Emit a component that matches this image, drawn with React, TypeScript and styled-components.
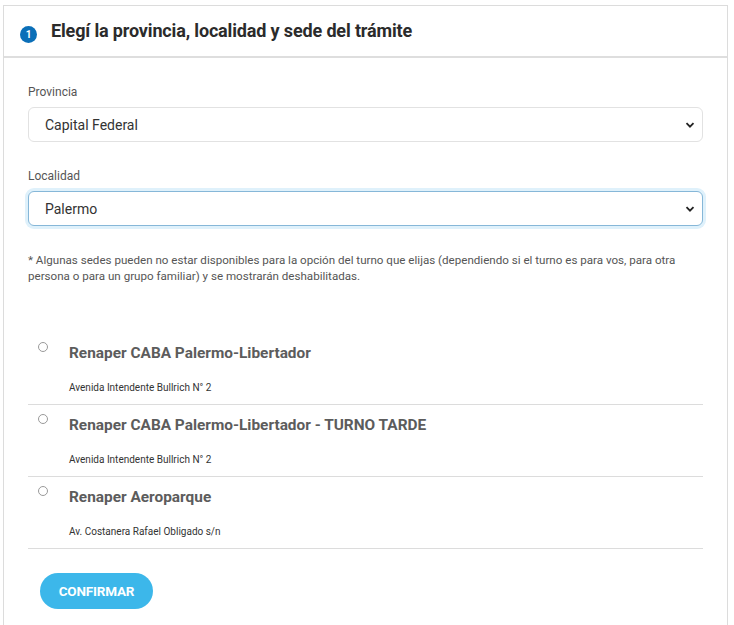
import React from "react";
import styled, { createGlobalStyle } from "styled-components";

const Global = createGlobalStyle`
  html, body { margin: 0; padding: 0; background: #fff; }
  body { font-family: Roboto, "Liberation Sans", sans-serif; color: #333; }
  * { box-sizing: border-box; }
`;

const Page = styled.div`
  padding: 5px 6px 0 3px;
`;

const Panel = styled.section`
  border: 1px solid #dcdcdc;
  border-bottom: none;
  background: #fff;
`;

const Header = styled.header`
  height: 52px;
  display: flex;
  align-items: center;
  gap: 14px;
  padding: 4px 0 0 16px;
  border-bottom: 2px solid #dedede;
`;

const Badge = styled.span`
  width: 17px;
  height: 17px;
  border-radius: 50%;
  background: #0b6fb8;
  color: #fff;
  font-size: 10px;
  font-weight: 700;
  display: inline-flex;
  align-items: center;
  justify-content: center;
  margin-top: 3px;
`;

const Title = styled.h2`
  margin: 0 0 5px 0;
  font-size: 18px;
  font-weight: 700;
  color: #2b2b2b;
  letter-spacing: -0.15px;
`;

const Body = styled.div`
  padding: 26px 24px 16px 24px;
`;

const Field = styled.div`
  display: flex;
  flex-direction: column;
  gap: 7px;
  margin-bottom: 26px;
`;

const Label = styled.label`
  font-size: 12px;
  line-height: 16px;
  color: #555;
`;

const SelectWrap = styled.div`
  position: relative;
`;

const Select = styled.select<{ $focused?: boolean }>`
  appearance: none;
  width: 100%;
  height: 35px;
  padding: 0 30px 0 16px;
  font-family: Roboto, "Liberation Sans", sans-serif;
  font-size: 14px;
  color: #333;
  background: #fff;
  border-radius: 6px;
  border: 1px solid ${(p) => (p.$focused ? "#86b7d8" : "#e2e2e2")};
  box-shadow: ${(p) => (p.$focused ? "0 0 0 3px #dff1fb" : "none")};
  outline: none;
`;

const Chevron = styled.svg`
  position: absolute;
  right: 8px;
  top: 50%;
  width: 10px;
  height: 10px;
  transform: translateY(-50%);
  pointer-events: none;
`;

const Note = styled.p`
  margin: 0 0 49px 0;
  font-size: 11.6px;
  line-height: 16px;
  color: #555;
`;

const List = styled.div`
  display: flex;
  flex-direction: column;
`;

const Item = styled.label`
  display: grid;
  grid-template-columns: 41px 1fr;
  height: 72px;
  border-bottom: 1px solid #dcdcdc;
  padding-top: 9px;
`;

const Radio = styled.input`
  appearance: none;
  margin: 0 0 0 10px;
  width: 10px;
  height: 10px;
  border-radius: 50%;
  border: 1px solid #9a9a9a;
  background: #fff;
`;

const ItemText = styled.div`
  display: flex;
  flex-direction: column;
`;

const ItemTitle = styled.span`
  font-size: 15.4px;
  font-weight: 700;
  color: #5c5c5c;
  line-height: 20px;
  margin-top: 1px;
`;

const Address = styled.span`
  margin-top: 18px;
  font-size: 10px;
  color: #333;
  line-height: 14px;
`;

const Confirm = styled.button`
  margin: 24px 0 0 12px;
  width: 113px;
  height: 36px;
  border: none;
  border-radius: 18px;
  background: #3cb7ea;
  color: #fff;
  font-family: Roboto, "Liberation Sans", sans-serif;
  font-size: 13.5px;
  font-weight: 700;
  letter-spacing: -0.2px;
`;

const ChevronIcon = () => (
  <Chevron viewBox="0 0 10 10">
    <path d="M1.5 3.2 L5 6.7 L8.5 3.2" fill="none" stroke="#222" strokeWidth="1.8" />
  </Chevron>
);

const sedes = [
  { name: "Renaper CABA Palermo-Libertador", addr: "Avenida Intendente Bullrich N° 2" },
  { name: "Renaper CABA Palermo-Libertador - TURNO TARDE", addr: "Avenida Intendente Bullrich N° 2" },
  { name: "Renaper Aeroparque", addr: "Av. Costanera Rafael Obligado s/n" },
];

export default function App() {
  return (
    <>
      <Global />
      <Page>
        <Panel>
          <Header>
            <Badge>1</Badge>
            <Title>Elegí la provincia, localidad y sede del trámite</Title>
          </Header>
          <Body>
            <Field>
              <Label>Provincia</Label>
              <SelectWrap>
                <Select defaultValue="cf">
                  <option value="cf">Capital Federal</option>
                </Select>
                <ChevronIcon />
              </SelectWrap>
            </Field>
            <Field>
              <Label>Localidad</Label>
              <SelectWrap>
                <Select $focused defaultValue="pa">
                  <option value="pa">Palermo</option>
                </Select>
                <ChevronIcon />
              </SelectWrap>
            </Field>
            <Note>
              * Algunas sedes pueden no estar disponibles para la opción del turno que elijas (dependiendo si el turno es para vos, para otra persona o para un grupo familiar) y se mostrarán deshabilitadas.
            </Note>
            <List>
              {sedes.map((s, i) => (
                <Item key={i}>
                  <Radio type="radio" name="sede" />
                  <ItemText>
                    <ItemTitle>{s.name}</ItemTitle>
                    <Address>{s.addr}</Address>
                  </ItemText>
                </Item>
              ))}
            </List>
            <Confirm>CONFIRMAR</Confirm>
          </Body>
        </Panel>
      </Page>
    </>
  );
}
